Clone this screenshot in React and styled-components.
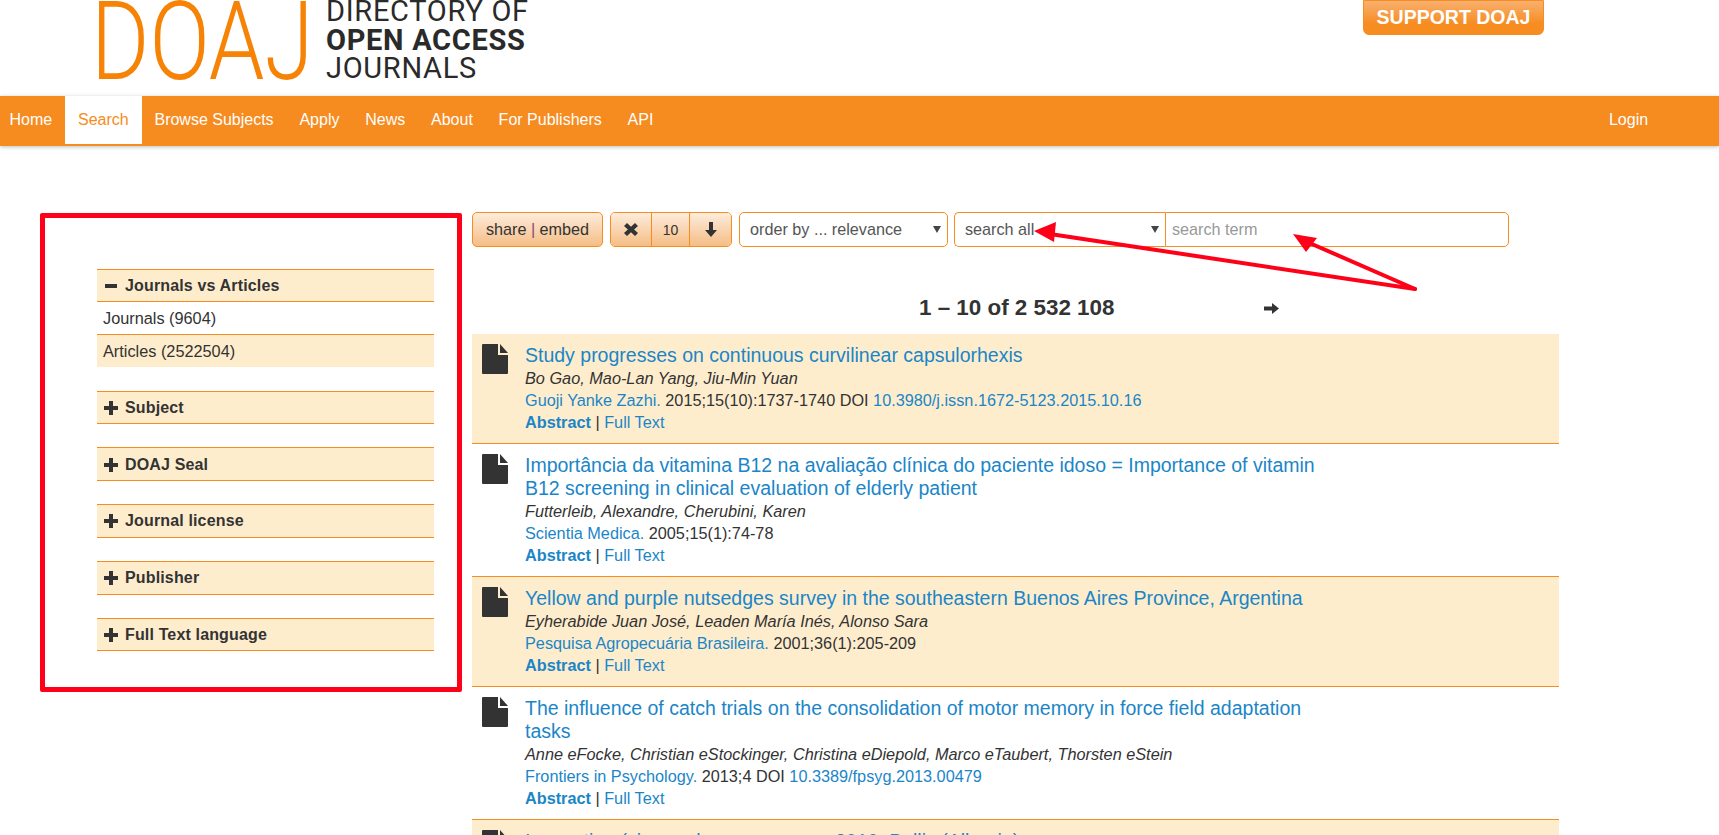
import React from 'react';
import styled, { createGlobalStyle } from 'styled-components';

const Global = createGlobalStyle`
    html, body {
        height: 100%;
        margin: 0;
        overflow: hidden;
        background: #fff;
    }
    body {
        color: #333;
        font-family: "Liberation Sans", Arial, sans-serif;
        font-size: 16px;
    }
    * {
        box-sizing: border-box;
    }
`;

const orange = '#f78c20';
const cream = '#feedcd';
const blue = '#1a86c8';

const Page = styled.div`
    position: relative;
    height: 835px;
    overflow: hidden;
`;

const Masthead = styled.header`
    align-items: flex-start;
    display: flex;
    height: 96px;
    justify-content: space-between;
    overflow: hidden;
    padding: 0 175px 0 91px;
`;

const Logo = styled.div`
    align-items: flex-start;
    display: flex;
    gap: 13px;
`;

const LogoMark = styled.div`
    height: 78px;
    padding-top: 3px;
    width: 222px;
`;

const LogoLetters = styled.span`
    color: #f78306;
    display: inline-block;
    font-family: Roboto, sans-serif;
    font-size: 110px;
    font-weight: 300;
    line-height: 78px;
    transform: scaleX(0.81);
    transform-origin: left top;
    white-space: nowrap;
`;

const LogoWords = styled.div`
    color: #2a2a2a;
    font-family: Roboto, sans-serif;
    font-size: 29px;
    letter-spacing: 0.7px;
    line-height: 28.5px;
    margin-top: -3px;
    white-space: nowrap;
`;

const LogoBold = styled.div`
    font-weight: 700;
`;

const SupportButton = styled.a`
    background: linear-gradient(#f9b06f, ${orange} 70%);
    border: 1px solid ${orange};
    border-radius: 0 0 6px 6px;
    color: #fff;
    display: block;
    font-size: 19.5px;
    font-weight: 700;
    height: 35px;
    line-height: 32px;
    text-align: center;
    width: 181px;
`;

const NavBar = styled.nav`
    align-items: flex-start;
    background: #f68b1f;
    box-shadow: 0 1px 4px rgba(0, 0, 0, 0.25);
    display: flex;
    height: 50px;
    padding-left: 9px;
`;

const NavItem = styled.a`
    background: ${p => (p.$active ? '#fff' : 'transparent')};
    color: ${p => (p.$active ? orange : '#fff')};
    height: 48px;
    line-height: 48px;
    margin-left: ${p => (p.$first ? '-12.4px' : '0')};
    padding: 0 12.9px;
`;

const NavSpacer = styled.div`
    flex: 1;
`;

const LoginItem = styled(NavItem)`
    margin-right: 58px;
`;

const Content = styled.div`
    align-items: flex-start;
    display: flex;
    padding: 66px 160px 0 97px;
`;

const Sidebar = styled.aside`
    flex: none;
    margin-right: 38px;
    padding-top: 56.8px;
    width: 337px;
`;

const Facet = styled.section`
    margin-bottom: 23.2px;
`;

const FacetHead = styled.div`
    align-items: center;
    background: ${cream};
    border-bottom: 1px solid ${orange};
    border-top: 1px solid ${orange};
    color: #333;
    display: flex;
    font-size: 16px;
    font-weight: 700;
    gap: 7px;
    height: 33.6px;
    letter-spacing: 0.15px;
    padding: 1px 0 0 7px;
`;

const FacetIcon = styled.svg`
    fill: #333;
    flex: none;
    height: 14px;
    width: 14px;
`;

const FacetRow = styled.div`
    background: ${p => (p.$shaded ? cream : '#fff')};
    border-bottom: ${p => (p.$shaded ? 'none' : `1px solid ${orange}`)};
    font-size: 16.3px;
    height: ${p => (p.$shaded ? '32px' : '33px')};
    line-height: 32px;
    padding-left: 6px;
`;

const Main = styled.main`
    flex: 1;
    min-width: 0;
`;

const Toolbar = styled.div`
    align-items: flex-start;
    display: flex;
    font-size: 16.2px;
    height: 35px;
`;

const ToolButton = styled.button`
    background: linear-gradient(#fdecdc, #f5bd85);
    border: 1px solid ${orange};
    border-radius: 5px;
    color: #333;
    font-family: inherit;
    font-size: 16.2px;
    height: 35px;
    margin-right: 7px;
    padding: 0;
    width: 131px;
`;

const Divider = styled.span`
    color: #8a4a7a;
`;

const ButtonGroup = styled.div`
    border: 1px solid ${orange};
    border-radius: 5px;
    display: flex;
    height: 35px;
    margin-right: 7px;
    overflow: hidden;
    width: 122px;
`;

const GroupCell = styled.div`
    align-items: center;
    background: linear-gradient(#fdecdc, #f5bd85);
    border-left: ${p => (p.$first ? 'none' : `1px solid ${orange}`)};
    color: #333;
    display: flex;
    flex: ${p => p.$flex};
    font-size: 14px;
    justify-content: center;
`;

const GlyphIcon = styled.svg`
    display: block;
    fill: #333;
    flex: none;
    height: ${p => p.$h}px;
    width: ${p => p.$w}px;
`;

const SelectBox = styled.div`
    align-items: center;
    background: #fff;
    border: 1px solid ${orange};
    border-radius: ${p => (p.$joined ? '5px 0 0 5px' : '5px')};
    border-right-width: ${p => (p.$joined ? '0' : '1px')};
    color: #555;
    display: flex;
    flex: none;
    height: 35px;
    justify-content: space-between;
    margin-right: ${p => (p.$joined ? '0' : '6px')};
    padding: 0 6px 0 10px;
    width: ${p => p.$width}px;
`;

const Caret = styled.span`
    border-left: 4px solid transparent;
    border-right: 4px solid transparent;
    border-top: 7px solid #444;
    display: block;
`;

const SearchInput = styled.div`
    background: #fff;
    border: 1px solid ${orange};
    border-radius: 0 5px 5px 0;
    color: #999;
    height: 35px;
    line-height: 33px;
    padding-left: 6px;
    width: 344px;
`;

const Pager = styled.div`
    align-items: center;
    display: flex;
    height: 52px;
    margin-top: 35px;
`;

const Count = styled.div`
    color: #333;
    font-size: 22.4px;
    font-weight: 700;
    margin-left: 447px;
    white-space: nowrap;
    width: 345px;
`;

const ResultList = styled.div`
    width: 1087px;
`;

const ResultRow = styled.article`
    background: ${p => (p.$shaded ? cream : '#fff')};
    border-bottom: 1px solid ${orange};
    display: flex;
    padding: 10px 0 10px 10px;
`;

const FileIcon = styled.svg`
    flex: none;
    fill: #333;
    height: 30px;
    margin-right: 17px;
    width: 26px;
`;

const ResultBody = styled.div`
    width: 810px;
`;

const Title = styled.a`
    color: ${blue};
    display: block;
    font-size: 19.5px;
    line-height: 23px;
`;

const Authors = styled.div`
    font-size: 16.3px;
    font-style: italic;
    line-height: 22px;
`;

const Citation = styled.div`
    font-size: 16.25px;
    line-height: 22px;
`;

const Link = styled.a`
    color: ${blue};
    font-weight: ${p => (p.$bold ? 700 : 400)};
`;

const Annotation = styled.div`
    border: 5px solid #ff0019;
    border-radius: 2px;
    height: 479px;
    left: 40px;
    pointer-events: none;
    position: absolute;
    top: 213px;
    width: 422px;
`;

const ArrowLayer = styled.svg`
    height: 835px;
    left: 0;
    pointer-events: none;
    position: absolute;
    top: 0;
    width: 1719px;
`;

const facets = ['Subject', 'DOAJ Seal', 'Journal license', 'Publisher', 'Full Text language'];

const results = [
    {
        title: 'Study progresses on continuous curvilinear capsulorhexis',
        authors: 'Bo Gao, Mao-Lan Yang, Jiu-Min Yuan',
        journal: 'Guoji Yanke Zazhi.',
        cite: ' 2015;15(10):1737-1740 DOI ',
        doi: '10.3980/j.issn.1672-5123.2015.10.16',
    },
    {
        title: 'Importância da vitamina B12 na avaliação clínica do paciente idoso = Importance of vitamin B12 screening in clinical evaluation of elderly patient',
        authors: 'Futterleib, Alexandre, Cherubini, Karen',
        journal: 'Scientia Medica.',
        cite: ' 2005;15(1):74-78',
    },
    {
        title: 'Yellow and purple nutsedges survey in the southeastern Buenos Aires Province, Argentina',
        authors: 'Eyherabide Juan José, Leaden María Inés, Alonso Sara',
        journal: 'Pesquisa Agropecuária Brasileira.',
        cite: ' 2001;36(1):205-209',
    },
    {
        title: 'The influence of catch trials on the consolidation of motor memory in force field adaptation tasks',
        authors: 'Anne eFocke, Christian eStockinger, Christina eDiepold, Marco eTaubert, Thorsten eStein',
        journal: 'Frontiers in Psychology.',
        cite: ' 2013;4 DOI ',
        doi: '10.3389/fpsyg.2013.00479',
    },
    {
        title: 'Innovation (visegrad summer camp 2010, Bullis (Albania)',
        authors: '',
        journal: '',
        cite: '',
    },
];

const DocIcon = () => (
    <FileIcon viewBox="0 0 26 30">
        <path d="M1 0h15v11h10v18a1 1 0 0 1-1 1H1a1 1 0 0 1-1-1V1a1 1 0 0 1 1-1z" />
        <path d="M18 0l8 9h-8z" />
    </FileIcon>
);

export default function App() {
    return (
        <Page>
            <Global />
            <Masthead>
                <Logo>
                    <LogoMark><LogoLetters>DOAJ</LogoLetters></LogoMark>
                    <LogoWords>
                        <div>DIRECTORY OF</div>
                        <LogoBold>OPEN ACCESS</LogoBold>
                        <div>JOURNALS</div>
                    </LogoWords>
                </Logo>
                <SupportButton>SUPPORT DOAJ</SupportButton>
            </Masthead>
            <NavBar>
                <NavItem $first>Home</NavItem>
                <NavItem $active>Search</NavItem>
                <NavItem>Browse Subjects</NavItem>
                <NavItem>Apply</NavItem>
                <NavItem>News</NavItem>
                <NavItem>About</NavItem>
                <NavItem>For Publishers</NavItem>
                <NavItem>API</NavItem>
                <NavSpacer />
                <LoginItem>Login</LoginItem>
            </NavBar>
            <Content>
                <Sidebar>
                    <Facet>
                        <FacetHead>
                            <FacetIcon viewBox="0 0 14 14"><path d="M1 5h12v4H1z" /></FacetIcon>
                            Journals vs Articles
                        </FacetHead>
                        <FacetRow>Journals (9604)</FacetRow>
                        <FacetRow $shaded>Articles (2522504)</FacetRow>
                    </Facet>
                    {facets.map(name => (
                        <Facet key={name}>
                            <FacetHead>
                                <FacetIcon viewBox="0 0 14 14"><path d="M5 0h4v5h5v4H9v5H5V9H0V5h5z" /></FacetIcon>
                                {name}
                            </FacetHead>
                        </Facet>
                    ))}
                </Sidebar>
                <Main>
                    <Toolbar>
                        <ToolButton>share <Divider>|</Divider> embed</ToolButton>
                        <ButtonGroup>
                            <GroupCell $first $flex="41">
                                <GlyphIcon $w={14} $h={13} viewBox="0 0 14 13">
                                    <path d="M3 0l4 3.7L11 0l3 3-3.9 3.5L14 10l-3 3-4-3.7L3 13l-3-3 3.9-3.5L0 3z" />
                                </GlyphIcon>
                            </GroupCell>
                            <GroupCell $flex="39">10</GroupCell>
                            <GroupCell $flex="42">
                                <GlyphIcon $w={12} $h={15} viewBox="0 0 12 15">
                                    <path d="M4 0h4v8h4l-6 7-6-7h4z" />
                                </GlyphIcon>
                            </GroupCell>
                        </ButtonGroup>
                        <SelectBox $width={209}>order by ... relevance<Caret /></SelectBox>
                        <SelectBox $width={211} $joined>search all<Caret /></SelectBox>
                        <SearchInput>search term</SearchInput>
                    </Toolbar>
                    <Pager>
                        <Count>1 – 10 of 2 532 108</Count>
                        <GlyphIcon $w={15} $h={11} viewBox="0 0 15 11">
                            <path d="M0 3.5h8V0l7 5.5L8 11V7.5H0z" />
                        </GlyphIcon>
                    </Pager>
                    <ResultList>
                        {results.map((r, i) => (
                            <ResultRow key={r.title} $shaded={i % 2 === 0}>
                                <DocIcon />
                                <ResultBody>
                                    <Title>{r.title}</Title>
                                    <Authors>{r.authors}</Authors>
                                    <Citation>
                                        <Link>{r.journal}</Link>{r.cite}
                                        {r.doi && <Link>{r.doi}</Link>}
                                    </Citation>
                                    <Citation>
                                        <Link $bold>Abstract</Link> | <Link>Full Text</Link>
                                    </Citation>
                                </ResultBody>
                            </ResultRow>
                        ))}
                    </ResultList>
                </Main>
            </Content>
            <Annotation />
            <ArrowLayer viewBox="0 0 1719 835">
                <g fill="#ff0019" stroke="#ff0019" strokeWidth="4" strokeLinecap="round">
                    <line x1="1415" y1="289" x2="1050" y2="234" />
                    <line x1="1415" y1="289" x2="1305" y2="241" />
                </g>
                <g fill="#ff0019">
                    <path d="M1034 231l22-9-2 20z" />
                    <path d="M1293 234l24 4-11 14z" />
                </g>
            </ArrowLayer>
        </Page>
    );
}
